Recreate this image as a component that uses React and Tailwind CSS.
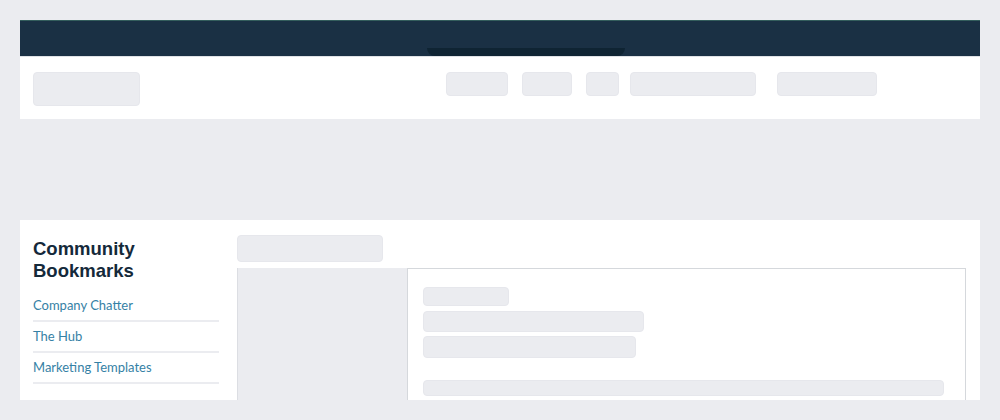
import React from "react";

const links = ["Company Chatter", "The Hub", "Marketing Templates"];

function Skel({ className = "" }) {
  return <div className={`bg-[#ebecf0] border border-[#e6e7ec] rounded-[4px] ${className}`} />;
}

export default function App() {
  return (
    <div className="min-h-[420px] bg-[#ebecf0] pt-5 px-5">
      <div className="h-[380px] overflow-hidden flex flex-col">
        {/* top bar */}
        <div className="h-9 shrink-0 bg-[#1a3044] border-t border-[#335d5c] flex items-end pl-[407px]">
          <div className="w-[198px] h-2 bg-[#0f2433] rounded-b-[8px]" />
        </div>

        {/* header */}
        <div className="h-[63px] shrink-0 bg-white border-t border-[#dfe2e6] flex items-start pt-[15px] px-[13px]">
          <Skel className="w-[107px] h-[34px]" />
          <div className="flex items-center ml-[306px]">
            <Skel className="w-[62px] h-6" />
            <Skel className="w-[50px] h-6 ml-[14px]" />
            <Skel className="w-[33px] h-6 ml-[14px]" />
            <Skel className="w-[126px] h-6 ml-[11px]" />
            <Skel className="w-[100px] h-6 ml-[21px]" />
          </div>
        </div>

        {/* banner */}
        <div className="h-[101px] shrink-0 bg-[#ebecf0]" />

        {/* content */}
        <div className="flex-1 bg-white flex pl-[13px] pr-[14px]">
          <aside className="w-[186px] shrink-0 pt-[18px]">
            <h2 className="font-['Liberation_Sans',Arial,sans-serif] font-bold text-[18.5px] leading-[22px] text-[#14293a]">
              Community
              <br />
              Bookmarks
            </h2>
            <ul className="mt-[9px] font-['Lato','Noto_Sans',sans-serif] text-[13px] text-[#3581a5]">
              {links.map((l) => (
                <li key={l} className="pt-[6px] pb-[7px] leading-[16px] border-b-2 border-[#ebecf0]">
                  {l}
                </li>
              ))}
            </ul>
          </aside>

          <main className="flex-1 ml-[18px] pt-[15px] flex flex-col">
            <Skel className="w-[146px] h-[27px]" />
            <div className="flex-1 mt-[6px] flex">
              <div className="w-[170px] bg-[#ebecf0] border-l border-[#dcdee3]" />
              <div className="flex-1 bg-white border-t border-x border-[#d5d8dc] pt-[18px] pl-[15px] pr-[21px]">
                <Skel className="w-[86px] h-[19px]" />
                <Skel className="w-[221px] h-[21px] mt-[5px]" />
                <Skel className="w-[213px] h-[22px] mt-[4px]" />
                <Skel className="w-full h-[16px] mt-[22px]" />
              </div>
            </div>
          </main>
        </div>
      </div>
    </div>
  );
}
